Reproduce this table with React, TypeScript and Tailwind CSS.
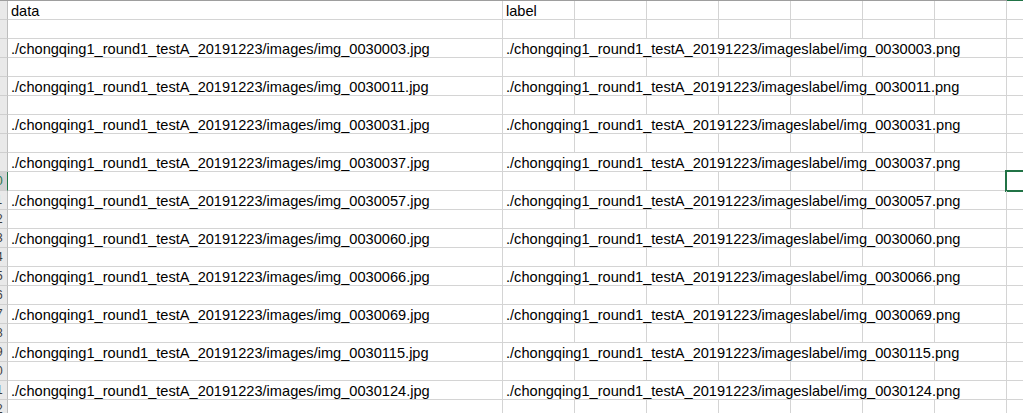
const COLS = 7; // B..H share the overflow from column B
const FILES = [
  "0030003",
  "0030011",
  "0030031",
  "0030037",
  "0030057",
  "0030060",
  "0030066",
  "0030069",
  "0030115",
  "0030124",
];

type Row =
  | { kind: "head"; a: string; b: string }
  | { kind: "file"; a: string; b: string }
  | { kind: "empty" };

function buildRows(): Row[] {
  const rows: Row[] = [{ kind: "head", a: "data", b: "label" }, { kind: "empty" }];
  FILES.forEach((id) => {
    rows.push({
      kind: "file",
      a: `./chongqing1_round1_testA_20191223/images/img_${id}.jpg`,
      b: `./chongqing1_round1_testA_20191223/imageslabel/img_${id}.png`,
    });
    rows.push({ kind: "empty" });
  });
  return rows;
}

const SELECTED_ROW = 10;

function RowHeader({ n }: { n: number }) {
  const active = n === SELECTED_ROW;
  return (
    <div
      className={`h-full w-[8px] shrink-0 overflow-hidden border-r border-b ${
        active
          ? "border-r-[#217346] bg-[#d2d2d2] text-[#217346]"
          : "border-r-[#bdbdbd] bg-[#e9e9e9] text-[#3b3b3b]"
      } border-b-[#cfcfcf]`}
    >
      <div className="ml-[-19px] w-[30px] text-center text-[12px] leading-[18px]">
        {n}
      </div>
    </div>
  );
}

function Cell({ text, w }: { text?: string; w: string }) {
  return (
    <div
      className={`h-full ${w} shrink-0 whitespace-nowrap border-r border-b border-[#d4d4d4] pl-[3px] pt-[1px] text-[14.6px] leading-[18px] text-black`}
    >
      {text}
    </div>
  );
}

export default function App() {
  const rows = buildRows();

  return (
    <div
      className="h-[413px] w-[1023px] overflow-hidden bg-white"
      style={{ fontFamily: '"Liberation Sans", Arial, sans-serif' }}
    >
      <div className="w-[1079px]">
        {/* column header bottom edge */}
        <div className="flex h-px">
          <div className="w-[1007px] bg-[#9e9e9e]" />
          <div className="w-[72px] bg-[#217346]" />
        </div>

        {rows.map((row, i) => {
          const n = i + 1;
          return (
            <div key={n} className="relative flex h-[19px]">
              <RowHeader n={n} />
              {row.kind === "file" ? (
                <>
                  <Cell w="w-[495px]" text={row.a} />
                  <Cell w="w-[504px]" text={row.b} />
                  <Cell w="w-[72px]" />
                </>
              ) : (
                <>
                  <Cell w="w-[495px]" text={row.kind === "head" ? row.a : undefined} />
                  <Cell w="w-[72px]" text={row.kind === "head" ? row.b : undefined} />
                  {Array.from({ length: COLS }).map((_, c) => (
                    <Cell key={c} w="w-[72px]" />
                  ))}
                </>
              )}
              {n === SELECTED_ROW ? (
                <div className="pointer-events-none absolute left-[1005px] top-[-2px] h-[22px] w-[75px] border-2 border-[#217346]" />
              ) : null}
            </div>
          );
        })}
      </div>
    </div>
  );
}
